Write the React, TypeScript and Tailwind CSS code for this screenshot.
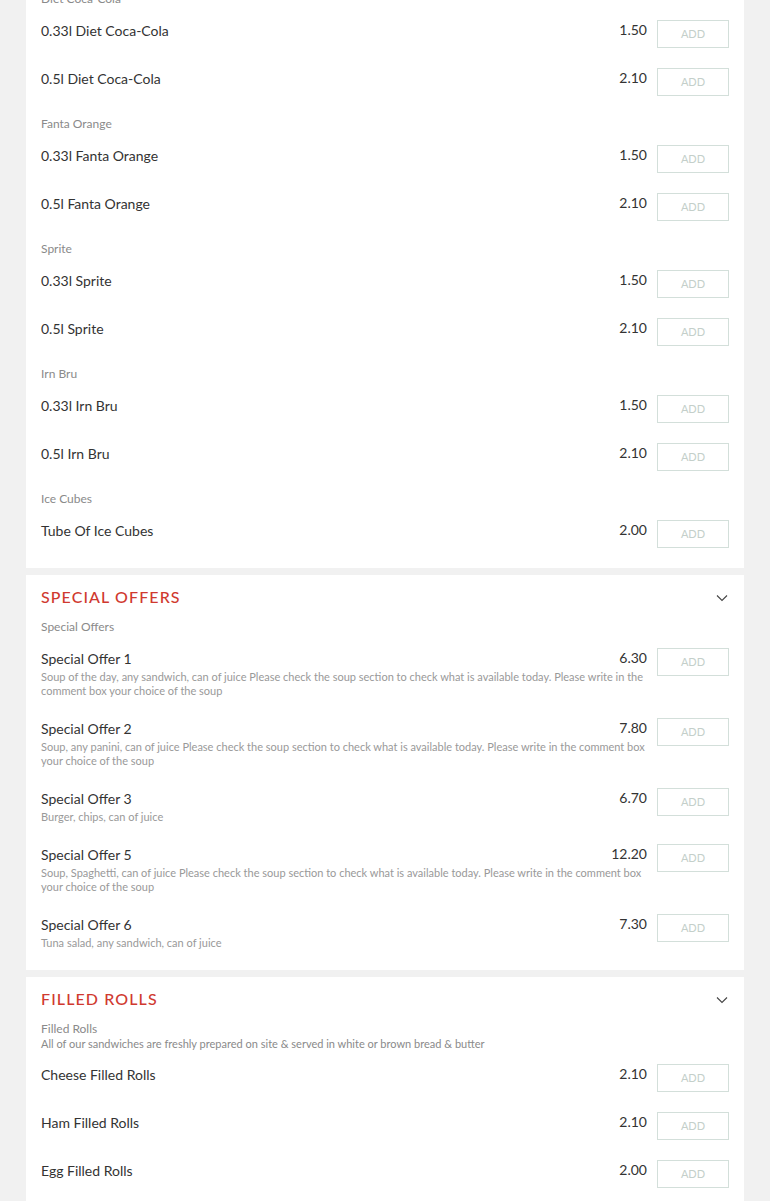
import React from 'react';

type Item = { name: string; price: string; desc?: string };
type Group = { label: string; note?: string; items: Item[] };
type Section = { title?: string; groups: Group[] };

const sections: Section[] = [
  {
    groups: [
      {
        label: 'Diet Coca-Cola',
        items: [
          { name: '0.33l Diet Coca-Cola', price: '1.50' },
          { name: '0.5l Diet Coca-Cola', price: '2.10' },
        ],
      },
      {
        label: 'Fanta Orange',
        items: [
          { name: '0.33l Fanta Orange', price: '1.50' },
          { name: '0.5l Fanta Orange', price: '2.10' },
        ],
      },
      {
        label: 'Sprite',
        items: [
          { name: '0.33l Sprite', price: '1.50' },
          { name: '0.5l Sprite', price: '2.10' },
        ],
      },
      {
        label: 'Irn Bru',
        items: [
          { name: '0.33l Irn Bru', price: '1.50' },
          { name: '0.5l Irn Bru', price: '2.10' },
        ],
      },
      {
        label: 'Ice Cubes',
        items: [{ name: 'Tube Of Ice Cubes', price: '2.00' }],
      },
    ],
  },
  {
    title: 'SPECIAL OFFERS',
    groups: [
      {
        label: 'Special Offers',
        items: [
          {
            name: 'Special Offer 1',
            price: '6.30',
            desc: 'Soup of the day, any sandwich, can of juice Please check the soup section to check what is available today. Please write in the comment box your choice of the soup',
          },
          {
            name: 'Special Offer 2',
            price: '7.80',
            desc: 'Soup, any panini, can of juice Please check the soup section to check what is available today. Please write in the comment box your choice of the soup',
          },
          { name: 'Special Offer 3', price: '6.70', desc: 'Burger, chips, can of juice' },
          {
            name: 'Special Offer 5',
            price: '12.20',
            desc: 'Soup, Spaghetti, can of juice Please check the soup section to check what is available today. Please write in the comment box your choice of the soup',
          },
          { name: 'Special Offer 6', price: '7.30', desc: 'Tuna salad, any sandwich, can of juice' },
        ],
      },
    ],
  },
  {
    title: 'FILLED ROLLS',
    groups: [
      {
        label: 'Filled Rolls',
        note: 'All of our sandwiches are freshly prepared on site & served in white or brown bread & butter',
        items: [
          { name: 'Cheese Filled Rolls', price: '2.10' },
          { name: 'Ham Filled Rolls', price: '2.10' },
          { name: 'Egg Filled Rolls', price: '2.00' },
        ],
      },
    ],
  },
];

const MenuRow: React.FC<{ item: Item }> = ({ item }) => (
  <div className="flex items-start pb-[20px]">
    <div className="flex-1 min-w-0">
      <div className="flex justify-between items-start h-[22px] pr-[10px]">
        <span className="text-[14px] leading-[22px] text-[#333]">{item.name}</span>
        <span className="text-[14px] leading-[20px] text-[#333]">{item.price}</span>
      </div>
      {item.desc && (
        <p className="text-[11px] leading-[14px] text-[#999] pr-[2px]">{item.desc}</p>
      )}
    </div>
    <button className="w-[72px] h-[28px] border border-[#d3dfda] text-[11px] text-[#c4cfca] bg-white">
      ADD
    </button>
  </div>
);

export default function App() {
  return (
    <div
      className="min-h-screen bg-[#f1f1f1] overflow-hidden"
      style={{ fontFamily: 'Lato, "Open Sans", sans-serif' }}
    >
      <div className="mx-[26px] -mt-[9px] flex flex-col gap-[7px]">
        {sections.map((s, si) => (
          <div key={si} className="bg-white px-[15px]">
            {s.title && (
              <div className="flex items-center justify-between pt-[12px] pb-[12px]">
                <h2 className="text-[16px] leading-[20px] font-medium tracking-[1.1px] text-[#d0392f]">
                  {s.title}
                </h2>
                <svg width="12" height="8" viewBox="0 0 12 8" className="mr-[1px] mt-[2px]">
                  <polyline points="1,1.5 6,6.5 11,1.5" fill="none" stroke="#444" strokeWidth="1.1" />
                </svg>
              </div>
            )}
            {s.groups.map((g, gi) => (
              <div key={gi}>
                <div className="mb-[13px]">
                  <div className="text-[12px] leading-[16px] text-[#8a8a8a]">{g.label}</div>
                  {g.note && <div className="text-[11px] leading-[14px] text-[#8a8a8a]">{g.note}</div>}
                </div>
                {g.items.map((it, ii) => (
                  <MenuRow key={ii} item={it} />
                ))}
              </div>
            ))}
          </div>
        ))}
      </div>
    </div>
  );
}
